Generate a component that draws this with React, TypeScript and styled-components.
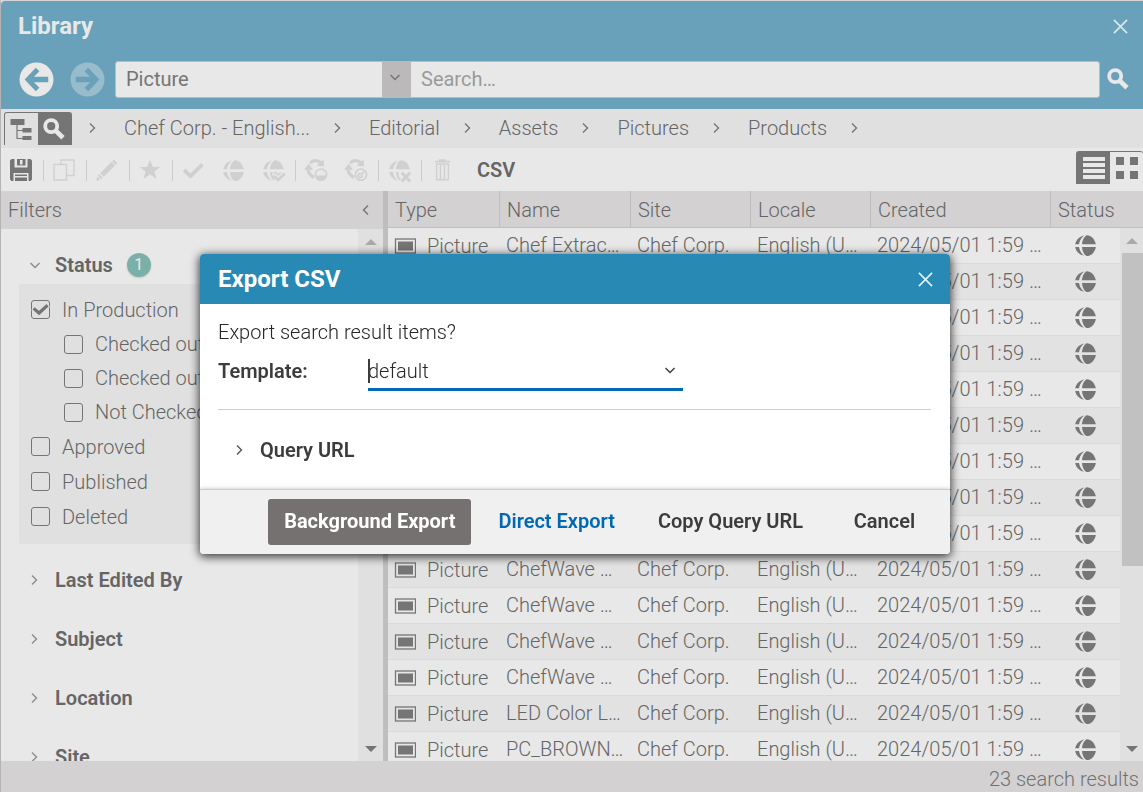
import React from "react";
import styled, { createGlobalStyle, css } from "styled-components";

const color = {
  headerBlue: "#69a1bb",
  dialogBlue: "#2789b4",
  accent: "#0069b4",
  paper: "#e8e8e8",
  soft: "#e0e0e0",
  stripe: "#e2e2e2",
  bar: "#d3d1d2",
  rule: "#bfbebf",
  ink: "#757575",
  text: "#656565",
  disabled: "#d0d0d0",
  dark: "#757170",
  dialogInk: "#3c3c3c",
};

const GlobalStyle = createGlobalStyle`
  *, *::before, *::after { box-sizing: border-box; }
  body {
    margin: 0;
    font-family: Roboto, "Liberation Sans", sans-serif;
    font-size: 20px;
    font-weight: 300;
    line-height: 24px;
    color: ${color.text};
    background: ${color.paper};
  }
  button, input, select { font: inherit; color: inherit; }
  svg { display: block; flex: none; }
`;

const plainButton = css`
  display: flex;
  align-items: center;
  justify-content: center;
  padding: 0;
  border: 0;
  background: none;
  cursor: pointer;
`;

const Window = styled.div`
  height: 100vh;
  display: flex;
  flex-direction: column;
  overflow: hidden;
  border-top: 1px solid #d6d6d6;
  border-left: 1px solid #b4b4b4;
`;

const Header = styled.header`
  flex: none;
  background: ${color.headerBlue};
  color: ${color.paper};
  border-top-left-radius: 4px;
`;

const TitleRow = styled.div`
  display: flex;
  align-items: center;
  justify-content: space-between;
  height: 50px;
  padding: 0 15px 0 17px;
`;

const Title = styled.h1`
  margin: 0;
  font-size: 24px;
  line-height: 28px;
  font-weight: 700;
`;

const IconButton = styled.button`
  ${plainButton}
`;

const SearchRow = styled.form`
  display: flex;
  align-items: center;
  height: 58px;
  padding: 0 13px 2px 18px;
`;

const NavButton = styled.button`
  ${plainButton}
  margin-right: 16px;
  &:disabled { opacity: 0.38; }
  & + & { margin-right: 10px; }
`;

const SearchBox = styled.div`
  flex: 1;
  display: flex;
  height: 37px;
  margin-right: 7px;
  border: 1px solid #bbb9ba;
  border-radius: 3px;
  background: ${color.paper};
  color: ${color.text};
  overflow: hidden;
`;

const TypePicker = styled.div`
  flex: none;
  display: grid;
  grid-template-columns: 266px 29px;
  & > * { grid-row: 1; }
`;

const TypeSelect = styled.select`
  grid-column: 1 / 3;
  appearance: none;
  border: 0;
  padding: 0 10px;
  background: none;
  font-weight: 400;
  color: ${color.ink};
`;

const TypeArrow = styled.span`
  grid-column: 2;
  display: flex;
  align-items: center;
  justify-content: center;
  padding: 0 3px 4px 0;
  background: #bbb9ba;
  pointer-events: none;
`;

const SearchInput = styled.input`
  flex: 1;
  min-width: 0;
  border: 0;
  padding: 0 10px;
  background: none;
  font-weight: 400;
  &::placeholder { color: #9a9a9a; opacity: 1; }
`;

const Breadcrumb = styled.nav`
  flex: none;
  display: flex;
  align-items: center;
  height: 39px;
  padding-left: 3px;
  background: ${color.soft};
`;

const ToggleGroup = styled.div`
  display: flex;
  height: 33px;
  border: 1px solid ${color.ink};
  border-bottom: 0;
  border-radius: 3px 3px 0 0;
`;

const Toggle = styled.button<{ $on?: boolean }>`
  ${plainButton}
  width: 33px;
  color: ${(p) => (p.$on ? color.paper : color.ink)};
  background: ${(p) => (p.$on ? color.ink : "transparent")};
`;

const Crumbs = styled.ol`
  display: flex;
  align-items: center;
  margin: 0;
  padding: 0 0 2px 15px;
  list-style: none;
`;

const Crumb = styled.li`
  display: flex;
  align-items: center;
  gap: 22px;
  margin-right: 25px;
`;

const CrumbLink = styled.a`
  color: inherit;
  text-decoration: none;
`;

const Toolbar = styled.div`
  flex: none;
  display: flex;
  align-items: center;
  height: 43px;
  padding-top: 1px;
  background: ${color.paper};
`;

const Tool = styled.button`
  ${plainButton}
  width: 40px;
  height: 40px;
  color: ${color.ink};
  &:disabled { color: ${color.disabled}; }
`;

const Separator = styled.span`
  width: 1px;
  height: 21px;
  margin-left: 2px;
  background: #cccccc;
`;

const CsvButton = styled.button`
  ${plainButton}
  padding: 0 15px;
  font-weight: 600;
`;

const ViewToggle = styled(ToggleGroup)`
  align-self: flex-start;
  margin: 2px 0 0 auto;
  border-right: 0;
`;

const Main = styled.main`
  flex: 1;
  min-height: 0;
  display: flex;
`;

const FilterPanel = styled.section`
  flex: none;
  width: 382px;
  display: flex;
  flex-direction: column;
`;

const FilterHead = styled.div`
  flex: none;
  display: flex;
  align-items: center;
  justify-content: space-between;
  height: 38px;
  padding: 0 11px 0 7px;
  background: ${color.bar};
`;

const PanelTitle = styled.h2`
  margin: 0;
  font-size: 20px;
  font-weight: 300;
`;

const FilterBody = styled.div`
  flex: 1;
  min-height: 0;
  display: flex;
`;

const FilterList = styled.div`
  flex: 1;
  overflow: hidden;
  padding: 18px 12px 0 18px;
`;

const FilterTitle = styled.button`
  ${plainButton}
  justify-content: flex-start;
  gap: 14px;
  width: 100%;
  height: 37px;
  padding: 0 0 1px 10px;
  font-weight: 600;
`;

const FilterGroup = styled.section`
  height: 59px;
`;

const Badge = styled.span`
  width: 24px;
  height: 24px;
  border-radius: 50%;
  background: #7bb0a9;
  color: ${color.paper};
  font-size: 16px;
  font-weight: 400;
  text-align: center;
  box-shadow: 0 1px 2px rgba(0, 0, 0, 0.15);
`;

const Options = styled.fieldset`
  min-width: 0;
  margin: 0 0 18px;
  padding: 8px 12px 10px;
  border: 0;
  border-radius: 3px;
  background: ${color.soft};
`;

const Option = styled.label<{ $child?: boolean }>`
  display: flex;
  align-items: center;
  gap: 12px;
  height: ${(p) => (p.$child ? 34 : 35)}px;
  padding-left: ${(p) => (p.$child ? 33 : 0)}px;
`;

const CheckWrap = styled.span`
  display: grid;
  width: 19px;
  height: 19px;
  & > * { grid-area: 1 / 1; place-self: center; }
  & > svg { pointer-events: none; }
`;

const Check = styled.input`
  appearance: none;
  width: 19px;
  height: 19px;
  margin: 0;
  border: 1px solid ${color.ink};
  border-radius: 3px;
`;

const Splitter = styled.div`
  flex: none;
  width: 5px;
  background: #bebebe;
`;

const Results = styled.section`
  flex: 1;
  min-width: 0;
  display: flex;
  overflow: hidden;
`;

const TableArea = styled.div`
  flex: 1;
  min-width: 0;
  overflow: hidden;
`;

const Table = styled.table`
  width: 100%;
  table-layout: fixed;
  border-collapse: separate;
  border-spacing: 0;
`;

const Col = styled.col<{ $w?: number }>`
  width: ${(p) => (p.$w ? `${p.$w}px` : "auto")};
`;

const Th = styled.th`
  height: 37px;
  padding: 1px 0 0 7px;
  text-align: left;
  font-weight: 300;
  white-space: nowrap;
  background: ${color.bar};
  border-bottom: 1px solid ${color.rule};
  border-right: 1px solid ${color.rule};
  &:last-child { border-right: 0; }
`;

const Tr = styled.tr`
  &:nth-child(even) { background: ${color.stripe}; }
`;

const Td = styled.td`
  height: 36px;
  padding: 0 6px 2px;
  white-space: nowrap;
  overflow: hidden;
  border-bottom: 1px solid #dadada;
`;

const TypeCell = styled.div`
  display: flex;
  align-items: center;
  gap: 11px;
  padding-top: 2px;
`;

const StatusCell = styled.div`
  display: flex;
  justify-content: center;
  padding-top: 2px;
  color: ${color.ink};
`;

const ScrollColumn = styled.div<{ $w: number }>`
  flex: none;
  width: ${(p) => p.$w}px;
  display: flex;
  flex-direction: column;
  align-items: flex-end;
  background: ${color.soft};
`;

const ScrollCap = styled.div`
  flex: none;
  width: 100%;
  height: 37px;
  background: ${color.bar};
  border-bottom: 1px solid ${color.rule};
`;

const ScrollArrow = styled.button`
  ${plainButton}
  flex: none;
  width: 100%;
  height: 25px;
`;

const ScrollThumb = styled.div<{ $share: number }>`
  flex: ${(p) => p.$share};
  width: 21px;
  background: #c1c1c1;
`;

const ScrollTrack = styled.div<{ $share: number }>`
  flex: ${(p) => p.$share};
`;

const Footer = styled.footer`
  flex: none;
  height: 31px;
  padding: 6px 4px 0;
  text-align: right;
  white-space: nowrap;
  color: #727272;
  background: ${color.bar};
`;

const Overlay = styled.div`
  position: fixed;
  inset: 0;
  display: flex;
  align-items: center;
  justify-content: center;
  padding: 16px 0 0 7px;
`;

const Dialog = styled.section`
  width: 750px;
  max-width: 100%;
  display: flex;
  flex-direction: column;
  border-radius: 4px;
  overflow: hidden;
  background: #ffffff;
  color: ${color.dialogInk};
  box-shadow: 0 2px 10px 1px rgba(0, 0, 0, 0.75);
`;

const DialogHead = styled.header`
  display: flex;
  align-items: center;
  justify-content: space-between;
  height: 50px;
  padding: 0 17px 0 18px;
  background: ${color.dialogBlue};
  color: #ffffff;
`;

const DialogTitle = styled.h2`
  margin: 0;
  font-size: 24px;
  line-height: 28px;
  font-weight: 700;
`;

const DialogBody = styled.div`
  padding: 16px 19px 27px 18px;
`;

const Question = styled.p`
  margin: 0;
  color: #262626;
`;

const FieldRow = styled.div`
  display: flex;
  margin: 8px 0 18px;
`;

const FieldLabel = styled.label`
  width: 150px;
  padding-top: 7px;
  font-weight: 600;
`;

const Combo = styled.div`
  position: relative;
  display: flex;
  align-items: center;
  width: 315px;
  height: 39px;
  border-bottom: 3px solid ${color.accent};
`;

const ComboInput = styled.input`
  flex: 1;
  min-width: 0;
  padding: 2px 0 0;
  border: 0;
  outline: 0;
  background: none;
  color: #262626;
`;

const ComboButton = styled.button`
  ${plainButton}
  width: 26px;
`;

const Caret = styled.span`
  position: absolute;
  left: 0;
  top: 7px;
  width: 2px;
  height: 24px;
  background: ${color.dialogInk};
`;

const Rule = styled.hr`
  margin: 0 0 28px;
  border: 0;
  border-top: 1px solid #cfcfcf;
`;

const Disclosure = styled.button`
  ${plainButton}
  gap: 14px;
  padding-left: 16px;
  font-weight: 600;
`;

const DialogFoot = styled.footer`
  display: flex;
  justify-content: flex-end;
  gap: 11px;
  padding: 9px 11px;
  border-top: 1px solid #cdcdcd;
  background: #f0f0f0;
  box-shadow: 0 0 4px rgba(0, 0, 0, 0.25);
`;

const Action = styled.button<{ $kind?: "primary" | "link" }>`
  ${plainButton}
  height: 46px;
  min-width: 109px;
  padding: 0 16px 2px;
  border-radius: 3px;
  white-space: nowrap;
  font-weight: ${(p) => (p.$kind === "primary" ? 700 : 600)};
  color: ${(p) => (p.$kind === "primary" ? "#ffffff" : p.$kind === "link" ? color.accent : color.dialogInk)};
  background: ${(p) => (p.$kind === "primary" ? color.dark : "transparent")};
`;

type Dir = "right" | "left" | "down";

const chevronPath: Record<Dir, string> = {
  right: "M3 1.5 7.5 6 3 10.5",
  left: "M8 1.5 3.5 6 8 10.5",
  down: "M1.5 4 6 8.5 10.5 4",
};

const Chevron = ({ dir, stroke = color.ink }: { dir: Dir; stroke?: string }) => (
  <svg width="12" height="12" viewBox="0 0 12 12" fill="none" stroke={stroke} strokeWidth="1.4" aria-hidden="true">
    <path d={chevronPath[dir]} />
  </svg>
);

const Cross = ({ size, stroke }: { size: number; stroke: string }) => (
  <svg width={size} height={size} viewBox="0 0 16 16" fill="none" stroke={stroke} strokeWidth="1.8" aria-hidden="true">
    <path d="M1 1 15 15M15 1 1 15" />
  </svg>
);

const RoundArrow = ({ flip }: { flip?: boolean }) => (
  <svg width="35" height="35" viewBox="0 0 35 35" aria-hidden="true">
    <circle cx="17.5" cy="17.5" r="17" fill={color.paper} />
    <g transform={flip ? "rotate(180 17.5 17.5)" : undefined} fill={color.headerBlue}>
      <path d="M5.6 17.5 16.8 5.8 20.4 9.2 15 14.7H29.2V20.3H15L20.4 25.8 16.8 29.2Z" />
    </g>
  </svg>
);

const Magnifier = () => (
  <svg width="23" height="23" viewBox="0 0 23 23" fill="none" stroke="currentColor" aria-hidden="true">
    <circle cx="8.2" cy="8.2" r="6" strokeWidth="3.8" />
    <path d="M12.4 12.4 20 19.8" strokeWidth="4.8" />
  </svg>
);

const TreeIcon = () => (
  <svg width="23" height="23" viewBox="0 0 23 23" aria-hidden="true">
    <g fill="currentColor">
      <path d="M.5 1h14v6H.5zM12.5 10h9v4.5h-9zM12.5 18h9v4h-9z" />
    </g>
    <path d="M7 7v13.5h6M7 12.5h6" fill="none" stroke="currentColor" strokeWidth="1.2" />
  </svg>
);

const SaveIcon = () => (
  <svg width="22" height="22" viewBox="0 0 22 22" aria-hidden="true">
    <path
      fill="currentColor"
      fillRule="evenodd"
      d="M1.5 0H4.5V8.5H17.5V0H20.5L22 1.5V20.5L20.5 22H18.5V14H3.5V22H1.5L0 20.5V1.5ZM7 0H15.5V6.5H7ZM10 1V5.5H12.5V1ZM5 15.5H17V17H5ZM5 18.5H17V22H5Z"
    />
  </svg>
);

const CopyIcon = () => (
  <svg width="22" height="22" viewBox="0 0 22 22" fill="none" stroke="currentColor" strokeWidth="1.4" aria-hidden="true">
    <path d="M8 5.5V1H21V16.5H13.5M1 5.5H13.5V21H1Z" />
  </svg>
);

const PencilIcon = () => (
  <svg width="22" height="22" viewBox="0 0 22 22" fill="currentColor" aria-hidden="true">
    <path d="M17.8.6 21.4 4.2 19.6 6 16 2.4ZM15.4 3 19 6.6 7.8 17.8 4.2 14.2ZM3.3 15.2 6.8 18.7 5.2 20.2 1.8 16.8ZM1.2 17.6 4.4 20.8.2 21.8Z" />
  </svg>
);

const StarIcon = () => (
  <svg width="22" height="22" viewBox="0 0 22 22" fill="currentColor" aria-hidden="true">
    <path d="m11 1 2.9 7h7.3l-5.8 4.6 2.2 7.4L11 15.5 4.4 20l2.2-7.4L.8 8h7.3z" />
  </svg>
);

const CheckIcon = () => (
  <svg width="22" height="22" viewBox="0 0 22 22" fill="none" stroke="currentColor" strokeWidth="3.8" aria-hidden="true">
    <path d="M2 11 8.6 17.2 20.4 5.4" />
  </svg>
);

const globeTop =
  "M9.2.5C4.6 1.5 1 4.8.2 9.3H4C4.5 5.8 6.2 2.8 9.2.5ZM11.4.2C15.6-.2 19.7 3.5 20.9 9.3H7C7.2 5.5 8.8 2 11.4.2Z";
const globeBottom =
  "M9.2 20.7C4.6 19.7 1 16.4.2 11.9H4C4.5 15.4 6.2 18.4 9.2 20.7ZM11.4 21C15.6 21.4 19.7 17.7 20.9 11.9H7C7.2 15.7 8.8 19.2 11.4 21Z";
const globeBottomCut =
  "M9.2 20.7C4.6 19.7 1 16.4.2 11.9H4C4.5 15.4 6.2 18.4 9.2 20.7ZM7 11.9H9.4C9.2 14.6 9.8 16.8 11.6 18.8L11 20.8C8.6 19 7.2 15.7 7 11.9Z";

const GlobeIcon = ({ mark }: { mark?: "check" | "cross" }) => (
  <svg width="21" height="21" viewBox="0 0 21 21" overflow="visible" aria-hidden="true">
    <path d={globeTop} fill="currentColor" />
    <path d={mark ? globeBottomCut : globeBottom} fill="currentColor" />
    {mark === "check" && (
      <g fill="none" stroke="currentColor">
        <path d="M10.8 15.6 15 20 21.8 13.6" strokeWidth="2.8" />
        <path d="M10.6 13.4 12.6 12.4 15.2 15 18 12.2" strokeWidth="1.4" />
      </g>
    )}
    {mark === "cross" && (
      <path d="M12.8 12.8 21 21.4M21 12.8 12.8 21.4" fill="none" stroke="currentColor" strokeWidth="3" />
    )}
  </svg>
);

const CycleIcon = ({ mark }: { mark: "globe" | "clock" }) => (
  <svg width="24" height="24" viewBox="0 0 24 24" aria-hidden="true">
    <g fill="none" stroke="currentColor" strokeWidth="3.2">
      <path d="M6.2 5.2C8.8 2 13.6 1.8 17 4.8" />
      <path d="M4.2 9.4C3.4 13 5.4 17.6 10 19.4" />
    </g>
    <path d="M19.8 1.6V8.6L12.6 7.4ZM.2 11.4 4.8 5.6 9 12Z" fill="currentColor" />
    <circle cx="17" cy="16.6" r="5.6" fill={color.paper} stroke="currentColor" strokeWidth="1.6" />
    {mark === "globe" ? (
      <path d="M11.8 17.4H22.2C22 20 20 21.8 17 21.8S12 20 11.8 17.4Z" fill="currentColor" />
    ) : (
      <path d="M16.6 17.2 20 13.6M16.4 15.4a2 2 0 1 0 2 2" fill="none" stroke="currentColor" strokeWidth="1.6" />
    )}
  </svg>
);

const TrashIcon = () => (
  <svg width="22" height="22" viewBox="0 0 22 22" fill="none" stroke="currentColor" aria-hidden="true">
    <path d="M4 2.6H19M8 1H14.5" strokeWidth="1.6" />
    <path d="M5.6 5V20.8H17.4V5ZM9.5 5V21M13.5 5V21" strokeWidth="1.4" />
  </svg>
);

const ListIcon = () => (
  <svg width="22" height="22" viewBox="0 0 22 22" fill="currentColor" aria-hidden="true">
    <path d="M0 0H22V4H0ZM0 6H22V10H0ZM0 12H22V16H0ZM0 18H22V22H0Z" />
  </svg>
);

const TilesIcon = () => (
  <svg width="22" height="22" viewBox="0 0 22 22" fill="currentColor" aria-hidden="true">
    <path d="M0 0H8V8H0ZM14 0H22V8H14ZM0 14H8V22H0ZM14 14H22V22H14Z" />
  </svg>
);

const PictureIcon = () => (
  <svg width="22" height="16" viewBox="0 0 22 16" aria-hidden="true">
    <rect x="1.5" y="1" width="20" height="14" fill="none" stroke={color.ink} strokeWidth="1.3" />
    <rect x="4" y="3.5" width="15" height="9" fill={color.ink} />
  </svg>
);

const BoxTick = () => (
  <svg width="19" height="19" viewBox="0 0 19 19" fill="none" overflow="visible" aria-hidden="true">
    <path d="M1.8 8.2 8 13.4 17.4 5" stroke={color.soft} strokeWidth="5" />
    <path d="M2.6 8.4 8 13 16.6 5.2" stroke={color.ink} strokeWidth="3.2" />
  </svg>
);

const Triangle = ({ down }: { down?: boolean }) => (
  <svg width="12" height="6" viewBox="0 0 12 6" aria-hidden="true">
    <path d={down ? "M0 0H12L6 6Z" : "M0 6H12L6 0Z"} fill={down ? color.ink : "#a9a9a9"} />
  </svg>
);

const crumbs = ["Chef Corp. - English...", "Editorial", "Assets", "Pictures", "Products"];

const tools: Array<{ label: string; icon: React.ReactNode; live?: boolean; rule?: boolean }> = [
  { label: "Save search", icon: <SaveIcon />, live: true, rule: true },
  { label: "Copy", icon: <CopyIcon />, rule: true },
  { label: "Edit", icon: <PencilIcon />, rule: true },
  { label: "Bookmark", icon: <StarIcon />, rule: true },
  { label: "Approve", icon: <CheckIcon /> },
  { label: "Publish", icon: <GlobeIcon /> },
  { label: "Approve and publish", icon: <GlobeIcon mark="check" />, rule: true },
  { label: "Localize", icon: <CycleIcon mark="globe" /> },
  { label: "Schedule", icon: <CycleIcon mark="clock" />, rule: true },
  { label: "Withdraw", icon: <GlobeIcon mark="cross" />, rule: true },
  { label: "Delete", icon: <TrashIcon /> },
];

const statusOptions = [
  { label: "In Production", checked: true },
  { label: "Checked out by me", child: true },
  { label: "Checked out by others", child: true },
  { label: "Not Checked out", child: true },
  { label: "Approved" },
  { label: "Published" },
  { label: "Deleted" },
];

const columns = [
  { name: "Type", width: 112 },
  { name: "Name", width: 131 },
  { name: "Site", width: 120 },
  { name: "Locale", width: 120 },
  { name: "Created", width: 180 },
  { name: "Status" },
];

const names = [
  "Chef Extrac…",
  ...Array.from({ length: 12 }, () => "ChefWave …"),
  "LED Color L…",
  "PC_BROWN…",
];

export default function App() {
  return (
    <>
      <GlobalStyle />
      <Window>
        <Header>
          <TitleRow>
            <Title>Library</Title>
            <IconButton type="button" aria-label="Close library">
              <Cross size={15} stroke="#dfe6ea" />
            </IconButton>
          </TitleRow>
          <SearchRow>
            <NavButton type="button" aria-label="Back"><RoundArrow /></NavButton>
            <NavButton type="button" aria-label="Forward" disabled><RoundArrow flip /></NavButton>
            <SearchBox>
              <TypePicker>
                <TypeSelect aria-label="Content type" defaultValue="Picture">
                  <option>Picture</option>
                </TypeSelect>
                <TypeArrow><Chevron dir="down" /></TypeArrow>
              </TypePicker>
              <SearchInput type="text" aria-label="Search" placeholder="Search…" />
            </SearchBox>
            <IconButton type="submit" aria-label="Start search"><Magnifier /></IconButton>
          </SearchRow>
        </Header>

        <Breadcrumb aria-label="Breadcrumb">
          <ToggleGroup>
            <Toggle type="button" aria-label="Tree"><TreeIcon /></Toggle>
            <Toggle type="button" aria-label="Search mode" $on><Magnifier /></Toggle>
          </ToggleGroup>
          <Crumbs>
            <Crumb><Chevron dir="right" /></Crumb>
            {crumbs.map((c) => (
              <Crumb key={c}>
                <CrumbLink href="#">{c}</CrumbLink>
                <Chevron dir="right" />
              </Crumb>
            ))}
          </Crumbs>
        </Breadcrumb>

        <Toolbar>
          {tools.map((t) => (
            <React.Fragment key={t.label}>
              <Tool type="button" aria-label={t.label} disabled={!t.live}>{t.icon}</Tool>
              {t.rule && <Separator />}
            </React.Fragment>
          ))}
          <CsvButton type="button">CSV</CsvButton>
          <ViewToggle>
            <Toggle type="button" aria-label="List view" $on><ListIcon /></Toggle>
            <Toggle type="button" aria-label="Tile view"><TilesIcon /></Toggle>
          </ViewToggle>
        </Toolbar>

        <Main>
          <FilterPanel>
            <FilterHead>
              <PanelTitle>Filters</PanelTitle>
              <IconButton type="button" aria-label="Collapse filters"><Chevron dir="left" /></IconButton>
            </FilterHead>
            <FilterBody>
              <FilterList>
                <FilterTitle type="button" aria-expanded="true">
                  <Chevron dir="down" stroke="#8c8c8c" />
                  Status
                  <Badge>1</Badge>
                </FilterTitle>
                <Options aria-label="Status">
                  {statusOptions.map((o) => (
                    <Option key={o.label} $child={o.child}>
                      <CheckWrap>
                        <Check type="checkbox" defaultChecked={o.checked} />
                        {o.checked && <BoxTick />}
                      </CheckWrap>
                      {o.label}
                    </Option>
                  ))}
                </Options>
                {["Last Edited By", "Subject", "Location", "Site"].map((f) => (
                  <FilterGroup key={f}>
                    <FilterTitle type="button" aria-expanded="false">
                      <Chevron dir="right" stroke="#8c8c8c" />
                      {f}
                    </FilterTitle>
                  </FilterGroup>
                ))}
              </FilterList>
              <ScrollColumn $w={25}>
                <ScrollArrow type="button" aria-label="Scroll filters up"><Triangle /></ScrollArrow>
                <ScrollThumb $share={250} />
                <ScrollTrack $share={232} />
                <ScrollArrow type="button" aria-label="Scroll filters down"><Triangle down /></ScrollArrow>
              </ScrollColumn>
            </FilterBody>
          </FilterPanel>
          <Splitter />
          <Results>
            <TableArea>
              <Table>
                <colgroup>
                  {columns.map((c) => <Col key={c.name} $w={c.width} />)}
                </colgroup>
                <thead>
                  <tr>
                    {columns.map((c) => <Th key={c.name} scope="col">{c.name}</Th>)}
                  </tr>
                </thead>
                <tbody>
                  {names.map((n, i) => (
                    <Tr key={i}>
                      <Td><TypeCell><PictureIcon />Picture</TypeCell></Td>
                      <Td>{n}</Td>
                      <Td>Chef Corp.</Td>
                      <Td>English (U…</Td>
                      <Td>2024/05/01 1:59 …</Td>
                      <Td><StatusCell><GlobeIcon /></StatusCell></Td>
                    </Tr>
                  ))}
                </tbody>
              </Table>
            </TableArea>
            <ScrollColumn $w={23}>
              <ScrollCap />
              <ScrollArrow type="button" aria-label="Scroll results up"><Triangle /></ScrollArrow>
              <ScrollThumb $share={313} />
              <ScrollTrack $share={170} />
              <ScrollArrow type="button" aria-label="Scroll results down"><Triangle down /></ScrollArrow>
            </ScrollColumn>
          </Results>
        </Main>
        <Footer>23 search results</Footer>
      </Window>

      <Overlay>
        <Dialog role="dialog" aria-modal="true" aria-labelledby="export-title">
          <DialogHead>
            <DialogTitle id="export-title">Export CSV</DialogTitle>
            <IconButton type="button" aria-label="Close dialog">
              <Cross size={15} stroke="#e6f0f5" />
            </IconButton>
          </DialogHead>
          <DialogBody>
            <Question>Export search result items?</Question>
            <FieldRow>
              <FieldLabel htmlFor="template">Template:</FieldLabel>
              <Combo>
                <ComboInput id="template" type="text" role="combobox" aria-expanded="false" defaultValue="default" />
                <Caret />
                <ComboButton type="button" aria-label="Choose template">
                  <Chevron dir="down" stroke={color.dialogInk} />
                </ComboButton>
              </Combo>
            </FieldRow>
            <Rule />
            <Disclosure type="button" aria-expanded="false">
              <Chevron dir="right" stroke="#555555" />
              Query URL
            </Disclosure>
          </DialogBody>
          <DialogFoot>
            <Action type="button" $kind="primary">Background Export</Action>
            <Action type="button" $kind="link">Direct Export</Action>
            <Action type="button">Copy Query URL</Action>
            <Action type="button">Cancel</Action>
          </DialogFoot>
        </Dialog>
      </Overlay>
    </>
  );
}
